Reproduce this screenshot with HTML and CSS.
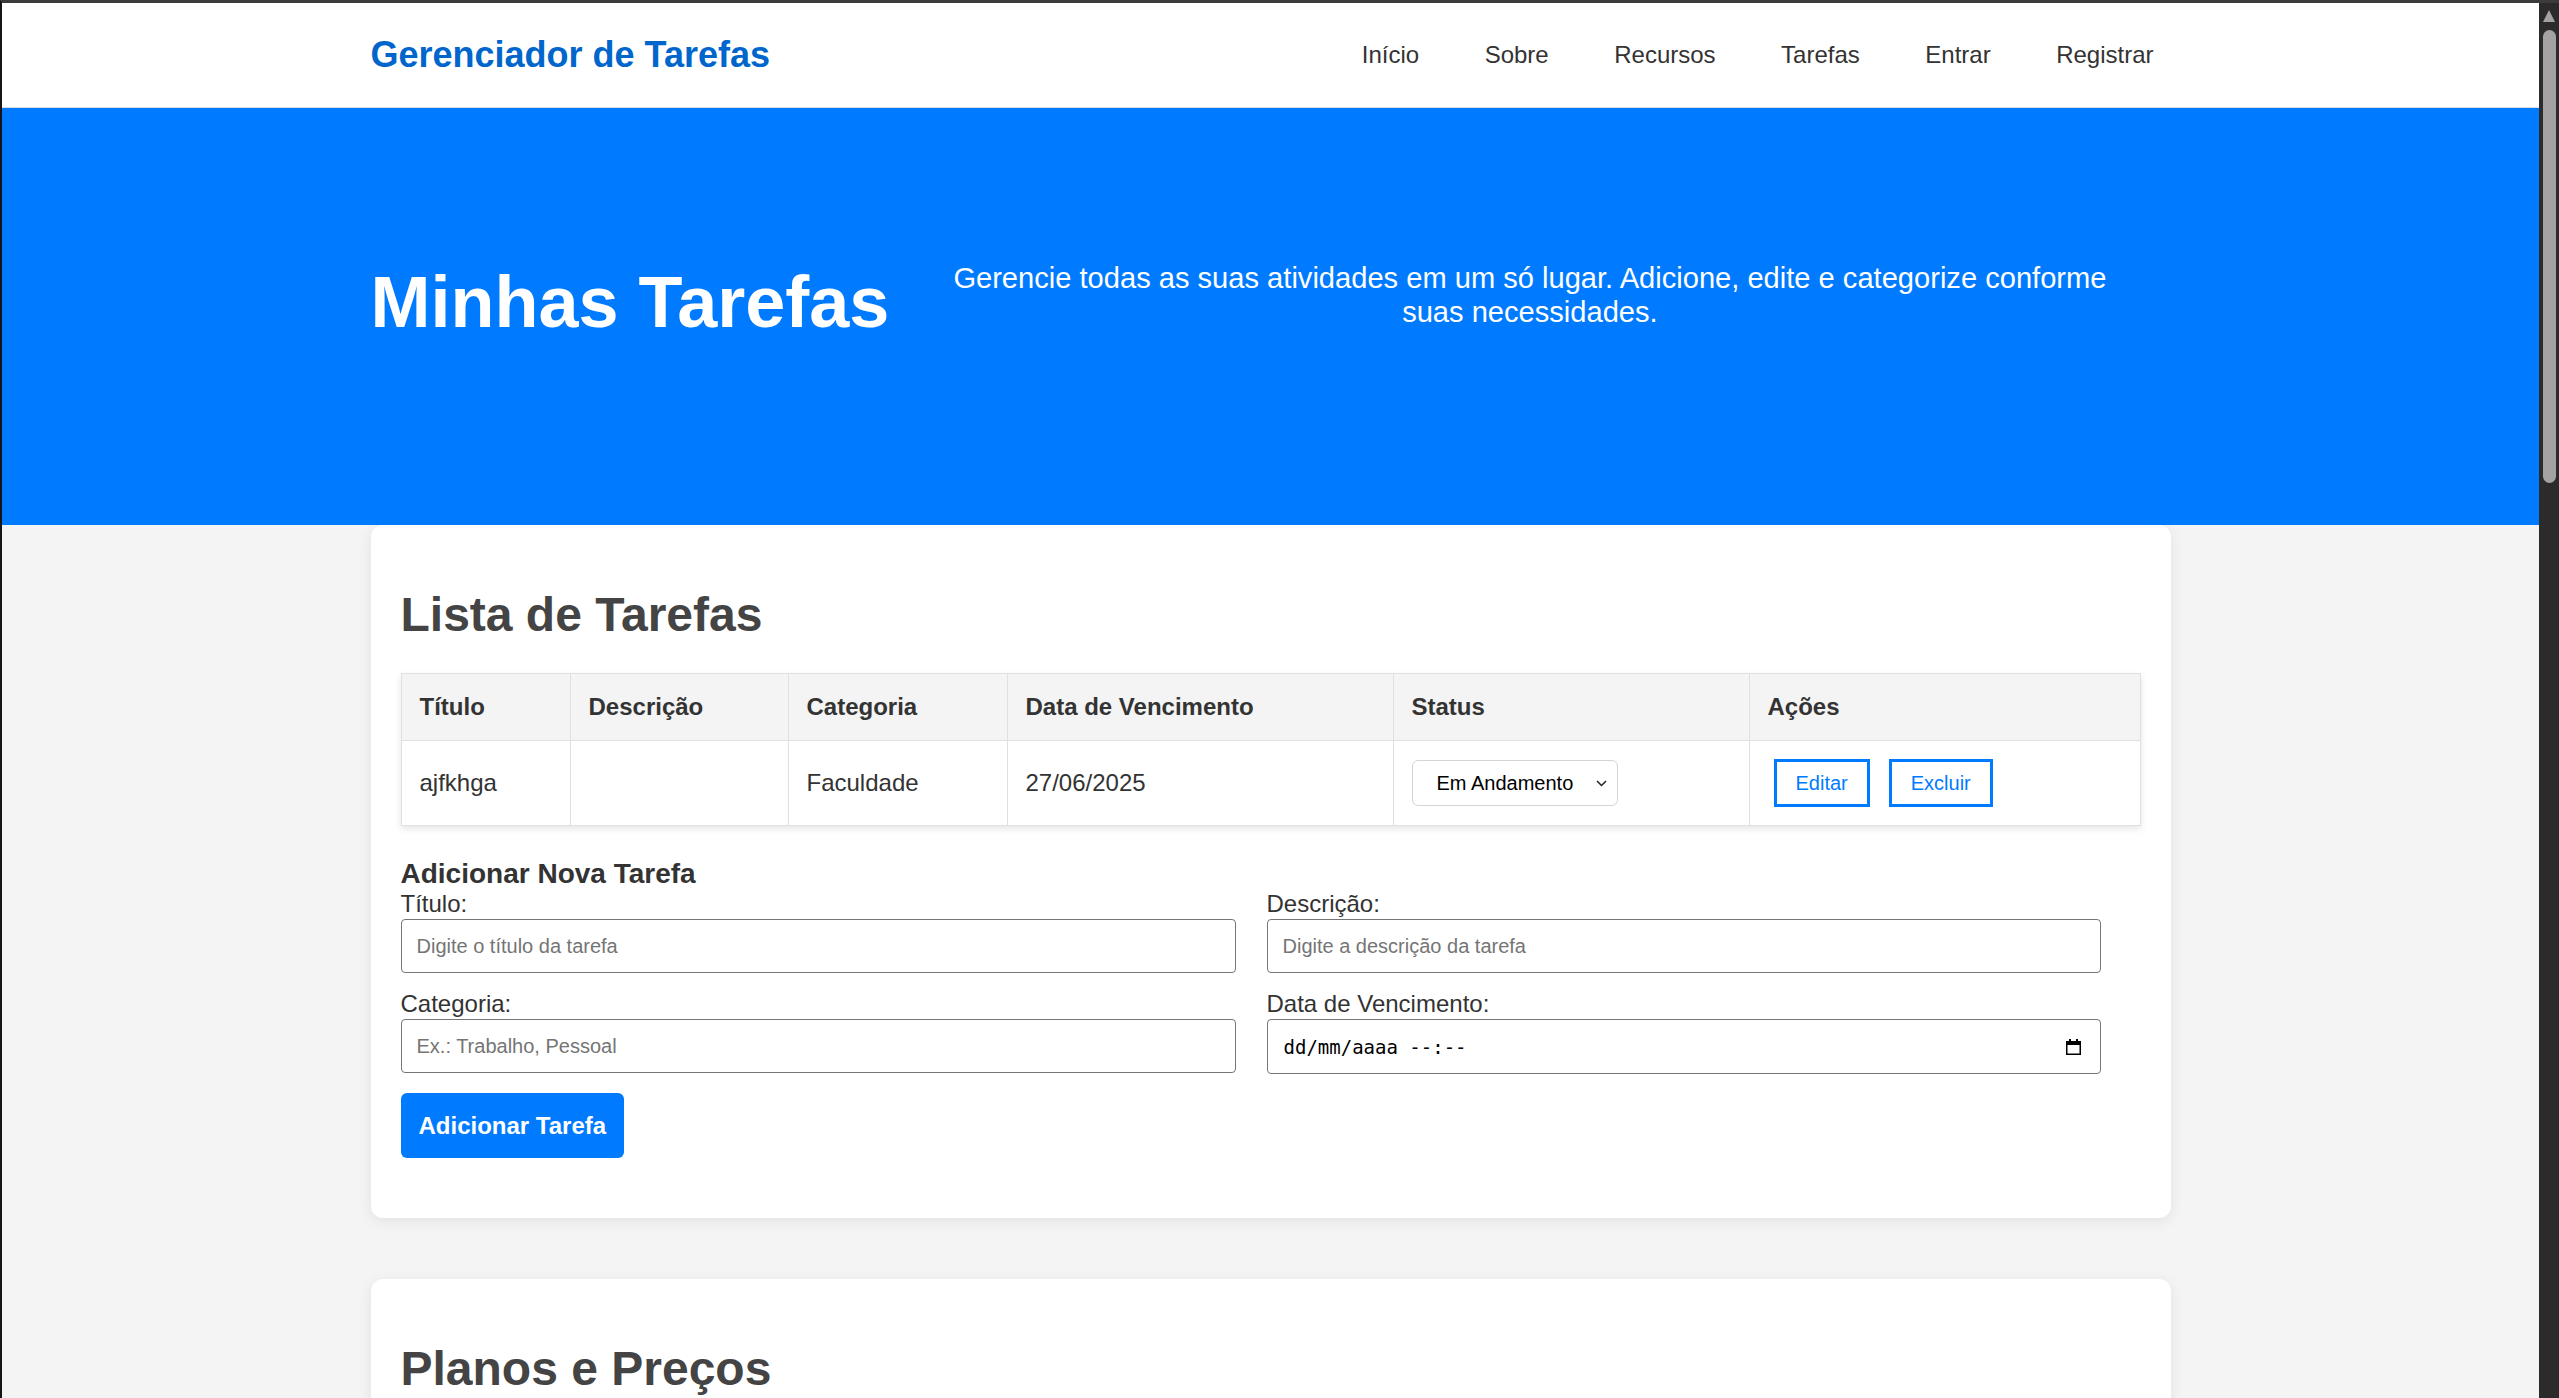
FILE: index.html
```html
<!DOCTYPE html>
<html lang="pt-BR">
<head>
<meta charset="utf-8">
<title>Gerenciador de Tarefas</title>
<link rel="stylesheet" href="styles.css">
</head>
<body>
<div class="window">
  <div class="viewport">
    <header class="site-header">
      <div class="container nav-wrap">
        <a class="logo" href="#">Gerenciador de Tarefas</a>
        <nav>
          <ul class="nav-list">
            <li><a href="#">Início</a></li>
            <li><a href="#">Sobre</a></li>
            <li><a href="#">Recursos</a></li>
            <li><a href="#">Tarefas</a></li>
            <li><a href="#">Entrar</a></li>
            <li><a href="#">Registrar</a></li>
          </ul>
        </nav>
      </div>
    </header>

    <section class="hero">
      <div class="container hero-inner">
        <h1>Minhas Tarefas</h1>
        <p>Gerencie todas as suas atividades em um só lugar. Adicione, edite e categorize conforme suas necessidades.</p>
      </div>
    </section>

    <main class="container">
      <section class="card">
        <h2>Lista de Tarefas</h2>
        <table class="task-table">
          <colgroup>
            <col class="col-title">
            <col class="col-desc">
            <col class="col-cat">
            <col class="col-date">
            <col class="col-status">
            <col class="col-actions">
          </colgroup>
          <thead>
            <tr>
              <th>Título</th>
              <th>Descrição</th>
              <th>Categoria</th>
              <th>Data de Vencimento</th>
              <th>Status</th>
              <th>Ações</th>
            </tr>
          </thead>
          <tbody>
            <tr>
              <td>ajfkhga</td>
              <td></td>
              <td>Faculdade</td>
              <td>27/06/2025</td>
              <td>
                <span class="select-wrap">
                  <select class="status-select">
                    <option>Pendente</option>
                    <option selected>Em Andamento</option>
                    <option>Concluída</option>
                  </select>
                  <svg class="chevron" width="11" height="7" viewBox="0 0 11 7"><path d="M1 1l4.5 4.5L10 1" fill="none" stroke="#222" stroke-width="1.5"/></svg>
                </span>
              </td>
              <td>
                <div class="actions">
                  <button class="btn-outline" type="button">Editar</button>
                  <button class="btn-outline" type="button">Excluir</button>
                </div>
              </td>
            </tr>
          </tbody>
        </table>

        <form class="add-task">
          <h3>Adicionar Nova Tarefa</h3>
          <div class="form-grid">
            <div class="field">
              <label for="titulo">Título:</label>
              <input id="titulo" type="text" placeholder="Digite o título da tarefa">
            </div>
            <div class="field">
              <label for="descricao">Descrição:</label>
              <input id="descricao" type="text" placeholder="Digite a descrição da tarefa">
            </div>
            <div class="field">
              <label for="categoria">Categoria:</label>
              <input id="categoria" type="text" placeholder="Ex.: Trabalho, Pessoal">
            </div>
            <div class="field">
              <label>Data de Vencimento:</label>
              <div class="date-input">
                <span class="date-text">dd/mm/aaaa --:--</span>
                <svg class="cal-icon" width="15" height="16" viewBox="0 0 15 16">
                  <rect x="3" y="0" width="2" height="3" fill="#000"/>
                  <rect x="10" y="0" width="2" height="3" fill="#000"/>
                  <rect x="0.75" y="2.75" width="13.5" height="12.5" fill="none" stroke="#000" stroke-width="1.5"/>
                  <rect x="0" y="2" width="15" height="4" fill="#000"/>
                </svg>
              </div>
            </div>
          </div>
          <button class="btn-primary" type="button">Adicionar Tarefa</button>
        </form>
      </section>

      <section class="card card-plans">
        <h2>Planos e Preços</h2>
      </section>
    </main>
  </div>

  <div class="scrollbar">
    <span class="sb-arrow"></span>
    <span class="sb-thumb"></span>
  </div>
</div>
</body>
</html>
```

FILE: styles.css
```css
* {
  box-sizing: border-box;
}

html,
body {
  height: 100%;
  margin: 0;
  overflow: hidden;
}

body {
  font-family: "Liberation Sans", Arial, sans-serif;
  background: #2b2b2b;
  color: #333;
}

/* browser frame */
.window {
  display: flex;
  height: 100%;
  border-top: 3px solid #3b3b3b;
  border-left: 2px solid #151515;
}

.viewport {
  flex: 1;
  min-width: 0;
  overflow: hidden;
  background: #f4f4f4;
}

.scrollbar {
  width: 20px;
  flex: none;
  background: #2b2b2b;
  display: flex;
  flex-direction: column;
  align-items: center;
}

.sb-arrow {
  margin-top: 7px;
  width: 0;
  height: 0;
  border-left: 6.5px solid transparent;
  border-right: 6.5px solid transparent;
  border-bottom: 12px solid #a3a3a3;
}

.sb-thumb {
  margin-top: 8px;
  width: 13px;
  height: 453px;
  border-radius: 7px;
  background: #a3a3a3;
}

.container {
  width: 1800px;
  margin: 0 auto;
}

/* header */
.site-header {
  background: #fff;
  border-bottom: 1px solid #dcdcdc;
}

.nav-wrap {
  height: 104px;
  display: flex;
  align-items: center;
  justify-content: space-between;
}

.logo {
  font-size: 36px;
  font-weight: bold;
  color: #0066cc;
  text-decoration: none;
}

.nav-list {
  display: flex;
  gap: 65.5px;
  list-style: none;
  margin: 0;
  padding: 0 17px 0 0;
}

.nav-list a {
  font-size: 24px;
  color: #333;
  text-decoration: none;
}

/* hero */
.hero {
  background: #007bff;
  color: #fff;
  padding: 153px 0 181px;
}

.hero-inner {
  display: flex;
  align-items: flex-start;
}

.hero h1 {
  margin: 0;
  font-size: 72px;
  line-height: 83px;
  font-weight: bold;
  flex: none;
}

.hero p {
  flex: 1;
  margin: 0;
  padding: 0 45px;
  font-size: 29.1px;
  line-height: 34px;
  text-align: center;
}

/* cards */
.card {
  background: #fff;
  border-radius: 12px;
  padding: 30px;
  box-shadow: 0 3px 14px rgba(0, 0, 0, 0.08);
  margin-bottom: 61px;
}

.card-plans {
  min-height: 600px;
}

.card h2 {
  font-size: 48px;
  line-height: 55px;
  color: #444;
  margin: 32px 0 31px;
}

/* table */
.task-table {
  width: 100%;
  border-collapse: collapse;
  table-layout: fixed;
  box-shadow: 0 3px 7px rgba(0, 0, 0, 0.1);
}

.col-title { width: 169px; }
.col-desc { width: 218px; }
.col-cat { width: 219px; }
.col-date { width: 386px; }
.col-status { width: 356px; }

.task-table th,
.task-table td {
  border: 1px solid #e0e0e0;
  padding: 18px;
  text-align: left;
  font-size: 24px;
  line-height: 28px;
  color: #333;
  vertical-align: middle;
}

.task-table th {
  background: #f4f4f4;
  font-weight: bold;
  padding-top: 19px;
  padding-bottom: 19px;
}

.select-wrap {
  position: relative;
  display: inline-block;
  vertical-align: middle;
}

.status-select {
  appearance: none;
  -webkit-appearance: none;
  width: 206px;
  height: 46px;
  border: 1px solid #d4d4d4;
  border-radius: 6px;
  background: #fff;
  padding: 0 0 0 24px;
  font: 20px "Liberation Sans", Arial, sans-serif;
  color: #000;
  display: block;
}

.chevron {
  position: absolute;
  right: 11px;
  top: 20px;
  pointer-events: none;
}

.actions {
  display: flex;
  gap: 19px;
  padding-left: 6px;
}

.btn-outline {
  height: 48px;
  padding: 0 19px;
  border: 3px solid #007bff;
  background: #fff;
  color: #007bff;
  font: 20px "Liberation Sans", Arial, sans-serif;
  border-radius: 0;
}

/* form */
.add-task {
  margin-bottom: 30px;
}

.add-task h3 {
  margin: 32px 0 0;
  font-size: 28px;
  line-height: 32px;
  color: #333;
}

.form-grid {
  display: grid;
  width: 1700px;
  grid-template-columns: 835px 834px;
  column-gap: 31px;
  row-gap: 17px;
}

.field label {
  display: block;
  font-size: 24px;
  line-height: 28px;
  color: #333;
  margin-bottom: 1px;
}

.field input,
.date-input {
  display: block;
  width: 100%;
  height: 54px;
  border: 1px solid #767676;
  border-radius: 4px;
  padding: 0 15px;
  font: 20px "Liberation Sans", Arial, sans-serif;
  color: #000;
  background: #fff;
}

.field input::placeholder {
  color: #757575;
}

.date-input {
  height: 55px;
  display: flex;
  align-items: center;
  justify-content: space-between;
  padding: 0 19px 0 16px;
}

.date-text {
  font-family: "DejaVu Sans Mono", "Liberation Mono", monospace;
  font-size: 19px;
  color: #000;
}

.cal-icon {
  display: block;
}

.btn-primary {
  margin-top: 19px;
  padding: 18px;
  border: none;
  border-radius: 6px;
  background: #007bff;
  color: #fff;
  font: bold 24px/29px "Liberation Sans", Arial, sans-serif;
}
```
